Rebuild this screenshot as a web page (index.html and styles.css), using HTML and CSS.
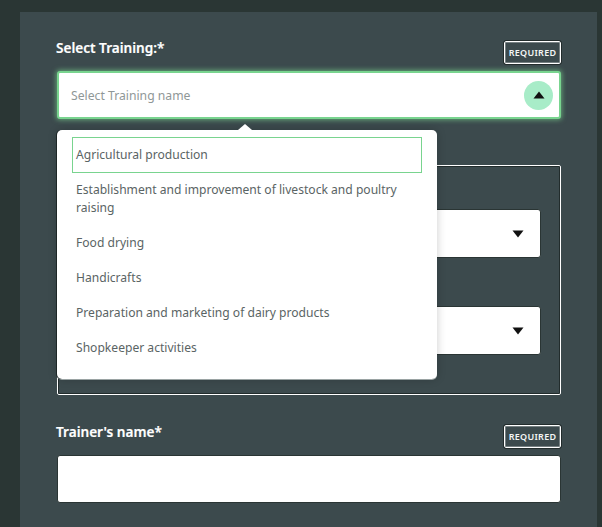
FILE: index.html
```html
<!DOCTYPE html>
<html lang="en">
<head>
<meta charset="utf-8">
<title>Select Training</title>
<link rel="stylesheet" href="styles.css">
</head>
<body>
<main class="panel">
  <section class="field field-training">
    <div class="field-head">
      <label class="label">Select Training:*</label>
      <span class="badge">REQUIRED</span>
    </div>
    <div class="control control-focus">
      <span class="placeholder">Select Training name</span>
      <span class="toggle"><svg width="12" height="8" viewBox="0 0 12 8"><path d="M6 0.5L11.5 7.5H0.5Z" fill="#111"/></svg></span>
    </div>
    <div class="menu">
      <span class="menu-caret"></span>
      <ul class="menu-list">
        <li class="menu-item menu-item-active">Agricultural production</li>
        <li class="menu-item">Establishment and improvement of livestock and poultry raising</li>
        <li class="menu-item">Food drying</li>
        <li class="menu-item">Handicrafts</li>
        <li class="menu-item">Preparation and marketing of dairy products</li>
        <li class="menu-item">Shopkeeper activities</li>
      </ul>
    </div>
  </section>
  <section class="group">
    <div class="control control-select"><svg width="12" height="8" viewBox="0 0 12 8"><path d="M0.5 0.5H11.5L6 7.5Z" fill="#111"/></svg></div>
    <div class="control control-select"><svg width="12" height="8" viewBox="0 0 12 8"><path d="M0.5 0.5H11.5L6 7.5Z" fill="#111"/></svg></div>
  </section>
  <section class="field field-trainer">
    <div class="field-head">
      <label class="label">Trainer's name*</label>
      <span class="badge">REQUIRED</span>
    </div>
    <div class="control"></div>
  </section>
</main>
</body>
</html>
```
FILE: styles.css
```css
* { box-sizing: border-box; }
html, body { margin: 0; height: 527px; overflow: hidden; }
body {
  background: #2a3634;
  font-family: "Noto Sans", sans-serif;
  padding: 12px 5px 0 20px;
}
.panel {
  background: #3c4a4d;
  height: 515px;
  padding: 29px 36px 0 37px;
}
.field { position: relative; }
.field-head {
  display: flex;
  justify-content: space-between;
  align-items: flex-start;
  height: 30px;
}
.label {
  color: #fff;
  font-size: 13.6px;
  font-weight: 600;
  line-height: 14px;
  margin-left: -1px;
  -webkit-text-stroke: 0.2px #fff;
}
.badge {
  width: 57px;
  height: 23px;
  border: 1px solid #fff;
  outline: 1px solid #222c2c;
  box-shadow: inset 0 0 0 1px rgba(255, 255, 255, 0.3);
  border-radius: 2px;
  color: #f4f6f6;
  font-size: 9px;
  font-weight: 600;
  line-height: 21px;
  text-align: center;
  letter-spacing: 0.3px;
}
.control {
  display: flex;
  align-items: center;
  height: 48px;
  background: #fff;
  border-radius: 3px;
  border: 1px solid #2a3534;
}
.control-focus {
  border: 2px solid #79d48f;
  justify-content: space-between;
  padding: 0 6px 0 12px;
  box-shadow: 0 0 5px 1px rgba(121, 212, 143, 0.65);
}
.placeholder { color: #8f9797; font-size: 12.2px; }
.toggle {
  width: 29px;
  height: 29px;
  border-radius: 50%;
  background: #a8ecc8;
  display: flex;
  align-items: center;
  justify-content: center;
}
.menu {
  position: absolute;
  left: 0;
  top: 89px;
  width: 380px;
  height: 249px;
  background: #fff;
  border-radius: 5px;
  box-shadow: -1px 0 0 #1d2626, 0 1px 0 #9aa3a3, 0 0 10px rgba(0, 0, 0, 0.2);
  z-index: 2;
  padding: 7px 15px 0;
}
.menu-caret {
  position: absolute;
  left: 181px;
  top: -6px;
  width: 0;
  height: 0;
  border-left: 7px solid transparent;
  border-right: 7px solid transparent;
  border-bottom: 6px solid #fff;
}
.menu-list { list-style: none; margin: 0; padding: 0; }
.menu-item {
  color: #5a6464;
  font-size: 12.1px;
  line-height: 18px;
  padding: 8px 4px 9px;
}
.menu-item-active { border: 1px solid #79d48f; padding: 8px 3px; }
.group {
  display: flex;
  flex-direction: column;
  gap: 48px;
  height: 230px;
  margin-top: 46px;
  padding: 43px 19px 0 20px;
  border: 1px solid #fff;
  border-radius: 2px;
  outline: 1px solid #222c2c;
  outline-offset: -2px;
}
.control-select { height: 49px; justify-content: flex-end; padding-right: 16px; }
.field-trainer { margin-top: 30px; }
```
